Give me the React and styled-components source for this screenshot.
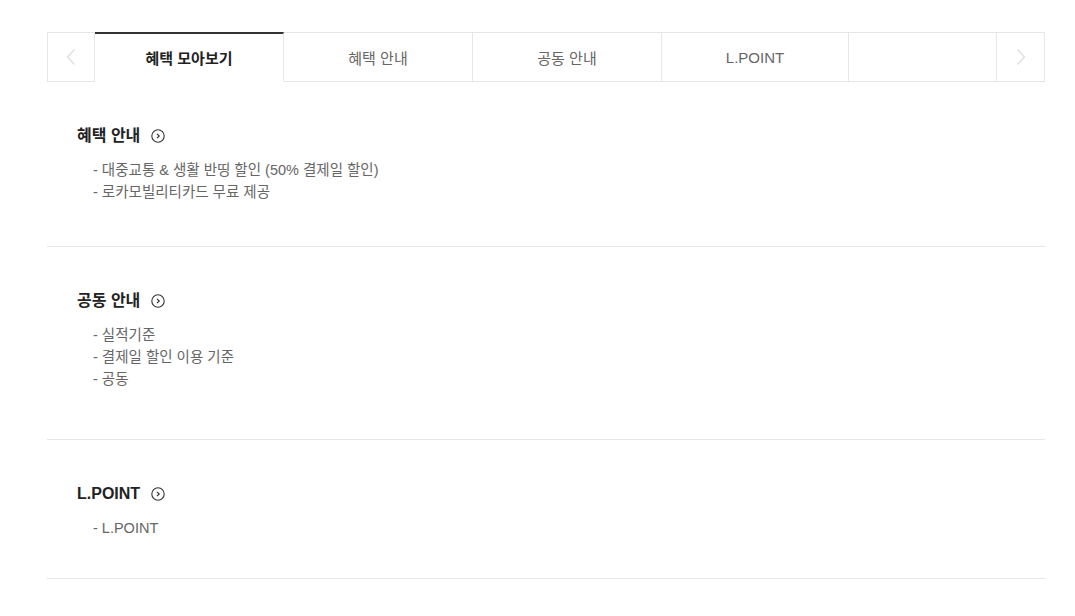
import React from "react";
import styled, { createGlobalStyle } from "styled-components";

const Global = createGlobalStyle`
  html, body { margin: 0; padding: 0; background: #fff; }
  body { font-family: "Liberation Sans", "Noto Sans CJK KR", Arial, sans-serif; color: #222; }
  * { box-sizing: border-box; }
`;

const Page = styled.div`
  width: 1075px;
  padding: 32px 30px 0 47px;
`;

const Wrap = styled.div`
  width: 998px;
`;

const TabBar = styled.div`
  display: flex;
  height: 50px;
`;

const ArrowCell = styled.button`
  width: ${(p) => p.$w}px;
  flex: none;
  display: flex;
  align-items: center;
  justify-content: center;
  background: #fff;
  border: 1px solid #e6e6e6;
  padding: 0;
  margin: 0;
  cursor: pointer;
`;

const Tab = styled.div`
  width: ${(p) => p.$w}px;
  flex: none;
  display: flex;
  align-items: center;
  justify-content: center;
  font-size: 15px;
  color: ${(p) => (p.$active ? "#222" : "#666")};
  font-weight: ${(p) => (p.$active ? 700 : 400)};
  border-top: ${(p) => (p.$active ? "2px solid #333" : "1px solid #e6e6e6")};
  border-bottom: ${(p) => (p.$active ? "1px solid transparent" : "1px solid #e6e6e6")};
  border-right: 1px solid #e6e6e6;
  padding-bottom: ${(p) => (p.$active ? "1px" : "0")};
  &:last-of-type {
    border-right: none;
  }
`;

const Section = styled.section`
  padding: 43px 30px ${(p) => p.$pb}px;
  border-bottom: 1px solid #e6e6e6;
`;

const Heading = styled.h3`
  margin: 0;
  display: flex;
  align-items: center;
  gap: 11px;
  font-size: 16px;
  line-height: 22px;
  font-weight: 700;
  color: #222;
`;

const List = styled.ul`
  list-style: none;
  margin: 12px 0 0;
  padding: 0 0 0 16px;
`;

const Item = styled.li`
  font-size: 14.5px;
  line-height: 22px;
  color: #666;
`;

const Chevron = ({ dir }) => (
  <svg width="10" height="18" viewBox="0 0 10 18" fill="none">
    <path
      d={dir === "left" ? "M8.5 1.5 L1.5 9 L8.5 16.5" : "M1.5 1.5 L8.5 9 L1.5 16.5"}
      stroke="#dcdcdc"
      strokeWidth="1.2"
    />
  </svg>
);

const CircleIcon = () => (
  <svg width="14" height="14" viewBox="0 0 14 14" fill="none">
    <circle cx="7" cy="7" r="6.2" stroke="#333" strokeWidth="1.1" />
    <path d="M6 4.8 L8.2 7 L6 9.2" stroke="#333" strokeWidth="1.2" />
  </svg>
);

const tabs = [
  { label: "혜택 모아보기", w: 189, active: true },
  { label: "혜택 안내", w: 189 },
  { label: "공동 안내", w: 189 },
  { label: "L.POINT", w: 187 },
  { label: "", w: 147 },
];

const sections = [
  {
    title: "혜택 안내",
    pb: 43,
    items: ["대중교통 & 생활 반띵 할인 (50% 결제일 할인)", "로카모빌리티카드 무료 제공"],
  },
  { title: "공동 안내", pb: 49, items: ["실적기준", "결제일 할인 이용 기준", "공동"] },
  { title: "L.POINT", pb: 39, items: ["L.POINT"] },
];

export default function App() {
  return (
    <>
      <Global />
      <Page>
        <Wrap>
          <TabBar>
            <ArrowCell $w={48} aria-label="이전">
              <Chevron dir="left" />
            </ArrowCell>
            {tabs.map((t, i) => (
              <Tab key={i} $w={t.w} $active={t.active}>
                {t.label}
              </Tab>
            ))}
            <ArrowCell $w={49} aria-label="다음">
              <Chevron dir="right" />
            </ArrowCell>
          </TabBar>
          {sections.map((s) => (
            <Section key={s.title} $pb={s.pb}>
              <Heading>
                {s.title}
                <CircleIcon />
              </Heading>
              <List>
                {s.items.map((it) => (
                  <Item key={it}>- {it}</Item>
                ))}
              </List>
            </Section>
          ))}
        </Wrap>
      </Page>
    </>
  );
}
